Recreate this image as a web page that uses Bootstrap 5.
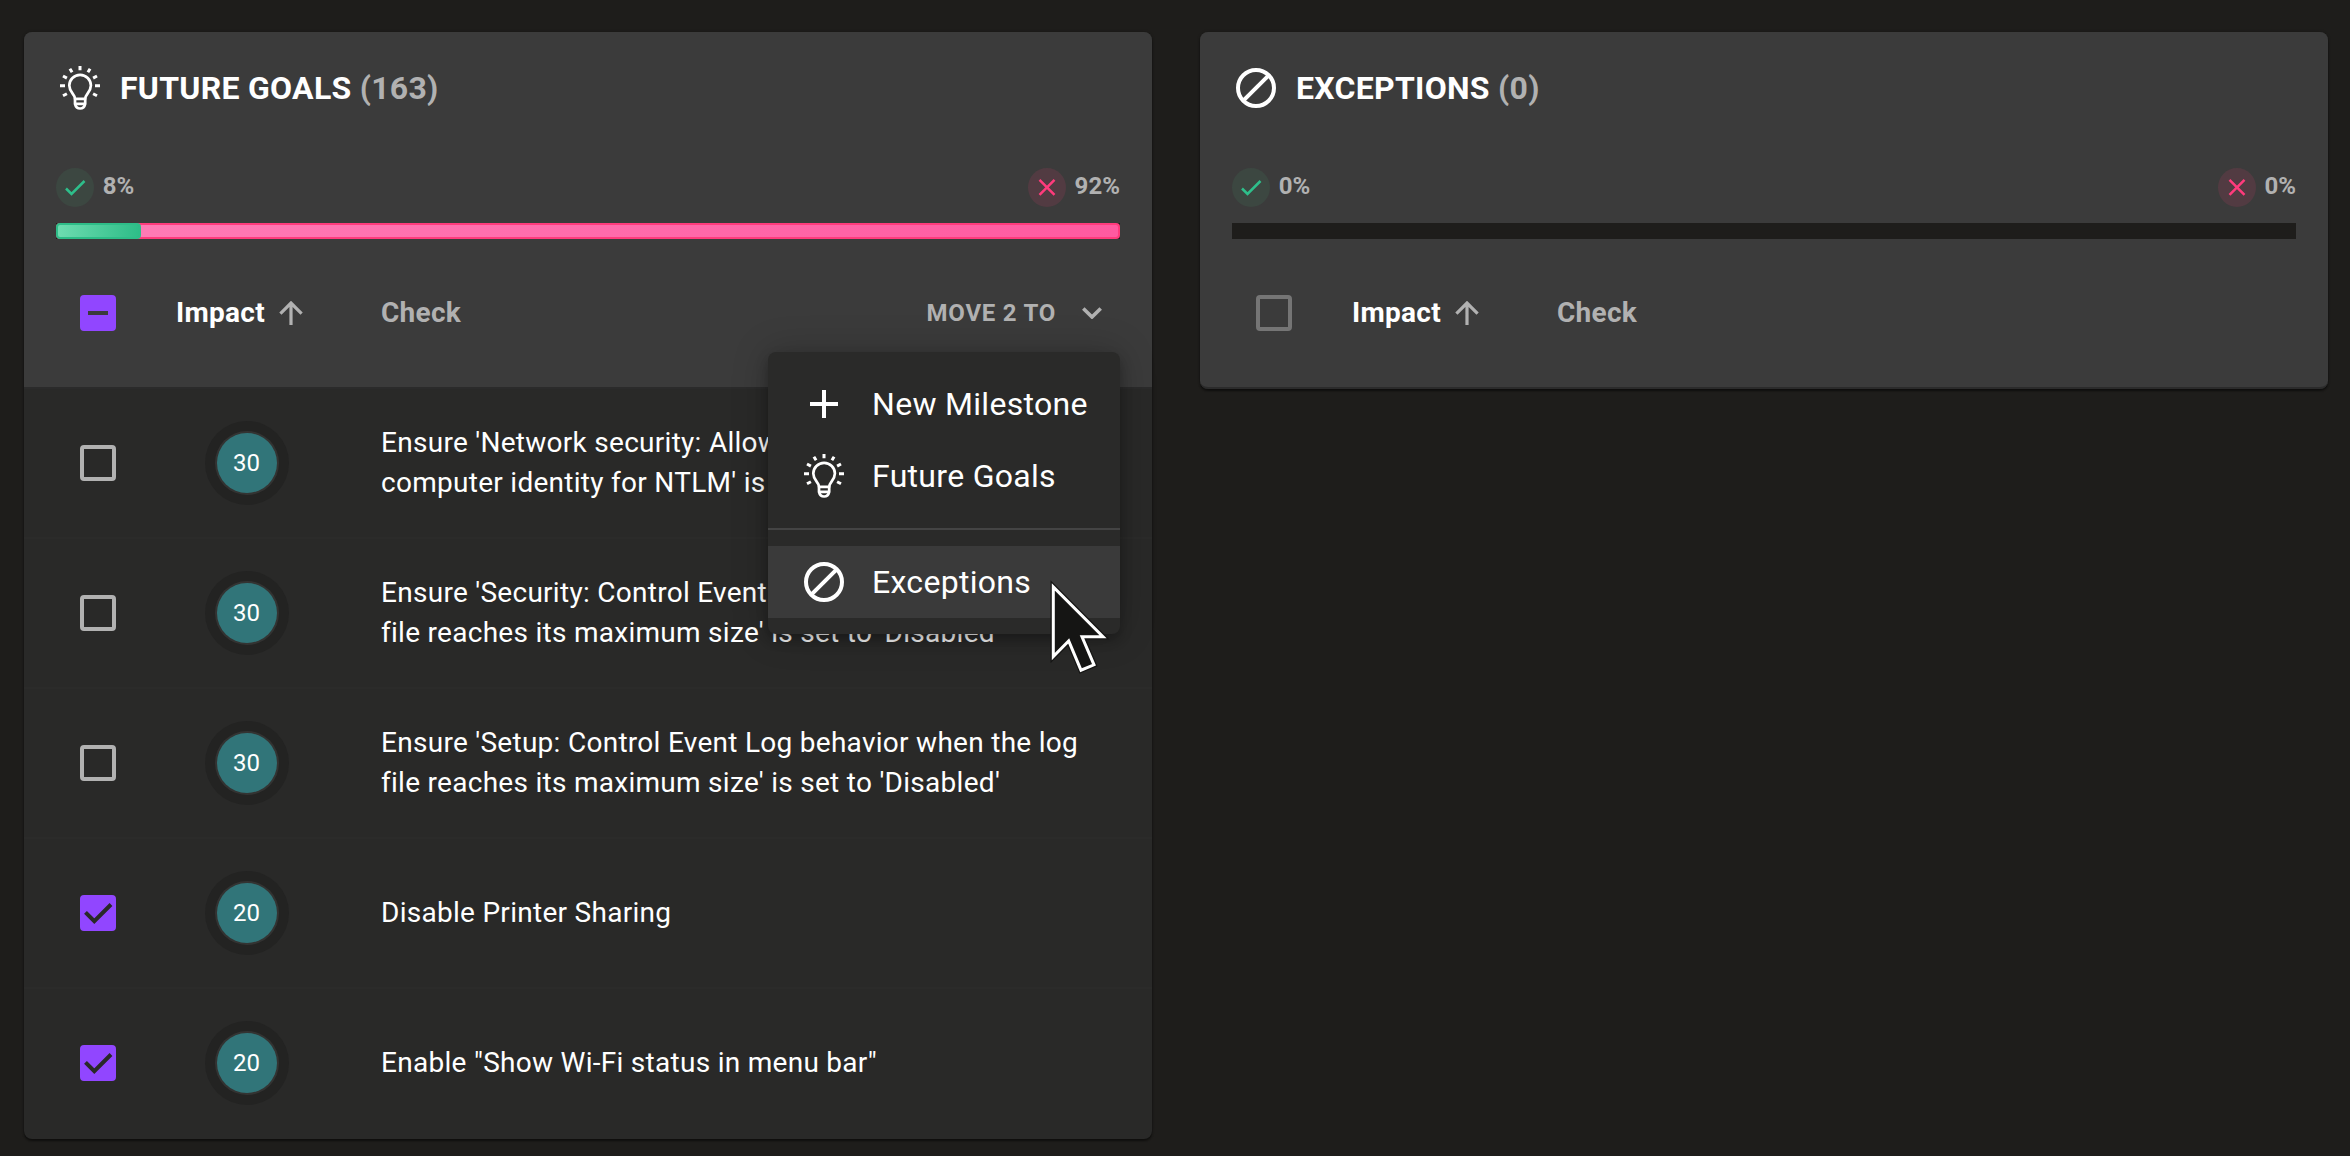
<!DOCTYPE html>
<html lang="en" data-bs-theme="dark">
<head>
<meta charset="utf-8">
<meta name="viewport" content="width=device-width, initial-scale=1">
<title>Milestones</title>
<link href="https://cdn.jsdelivr.net/npm/bootstrap@5.3.0/dist/css/bootstrap.min.css" rel="stylesheet">
<style>
  body { background: #1e1d1b; color: #fff; font-family: Roboto, sans-serif; font-size: 28px; line-height: 40px; letter-spacing: .01em; height: 1156px; overflow: hidden; }
  .board { padding: 32px 22px 0 24px; gap: 48px; }
  .goal-card { width: 1128px; background: #292928; border: 0; border-radius: 8px; box-shadow: 0 2px 2px rgba(0,0,0,.45), 0 0 3px rgba(0,0,0,.25); color: #fff; }
  .goal-head { background: #3b3b3b; height: 357px; padding: 32px 32px 0; border-bottom: 2px solid #2b2b2b; border-radius: 8px 8px 0 0; letter-spacing: .28px; }
  .goal-card.empty .goal-head { border-radius: 8px; }
  .goal-title { font-size: 32px; line-height: 48px; font-weight: 700; gap: 16px; margin: 0; letter-spacing: .28px; }
  .muted { color: #b1b1b1; }
  .ico { width: 48px; height: 48px; flex: none; display: block; }
  .rates { height: 39px; margin-top: 56px; font-size: 24px; line-height: 36px; font-weight: 700; letter-spacing: .05px; }
  .rate { gap: 8.700px; }
  .dot { width: 38px; height: 39px; border-radius: 50%; flex: none; }
  .dot.ok { background: #3c4741; } .dot.bad { background: #523b42; }
  .dot svg { display: block; }
  .meter { height: 16px; margin-top: 16px; background: #1e1d1b; }
  .meter-fail { height: 16px; border: 2px solid #ff3b7c; border-radius: 4px; background: linear-gradient(90deg,#ff7db7,#ff5aa0); }
  .meter-pass { height: 16px; margin: -2px; border: 2px solid #2ebd88; border-radius: 4px; background: linear-gradient(90deg,#6ddcb0,#2ebd88); }
  .cols { height: 48px; margin-top: 50px; padding-left: 24px; font-weight: 700; }
  .c-check { width: 96px; flex: none; }
  .c-impact { width: 205px; flex: none; }
  .sort { margin-left: 14.500px; }
  .tick { width: 36px; height: 36px; border-radius: 4px; border: 4px solid #b1b1b1; }
  .tick.off { border-color: #757575; }
  .tick.on { background: #9146ff; border-color: #9146ff; color: #292928; }
  .tick svg { display: block; margin: -4px; }
  .move-btn { font-size: 24px; font-weight: 700; letter-spacing: .75px; padding: 0 18px 0 0; gap: 26px; border: 0; line-height: 36px; }
  .check-row { height: 150px; padding: 0 32px 0 56px; border-bottom: 2px solid #2b2b2a; letter-spacing: .28px; }
  .check-row:last-child { border-color: transparent; }
  .score { width: 60px; height: 60px; border-radius: 50%; background: #317579; box-shadow: 0 0 0 2px #333332, 0 0 0 12px #232322; font-size: 24px; letter-spacing: 0; margin-left: 41px; padding-right: 1px; }
  .move-menu { display: block; left: 768px; top: 352px; width: 352px; padding: 16px 0; background: #2a2a29; border: 0; border-radius: 8px; box-shadow: 0 6px 12px rgba(0,0,0,.25), 0 0 36px rgba(0,0,0,.22); font-size: 32px; }
  .move-menu .dropdown-item { height: 72px; padding: 0 32px; gap: 24px; color: #fff; letter-spacing: .3px; background: transparent; }
  .move-menu .dropdown-item.hovered { background: #3a3a3a; }
  .move-menu .dropdown-divider { margin: 16px 0; border-top: 2px solid #444; opacity: 1; }
  .pointer { left: 1046px; top: 575px; z-index: 1100; }
</style>
</head>
<body>
<svg class="d-none">
  <symbol id="bulb" viewBox="0 0 48 48">
    <g fill="none" stroke="currentColor" stroke-width="2.700" stroke-linecap="round" stroke-linejoin="round">
      <path d="M19 34.800c0-4.800-5.700-6.600-5.700-13.200a10.800 10.800 0 0 1 21.600 0c0 6.600-5.700 8.400-5.700 13.200z"/>
      <path d="M19 34.800v5.200c.6 2.600 2.300 4.500 5.100 4.500s4.500-1.900 5.100-4.500v-5.200M19.300 39.800h9.600"/>
      <path stroke-linecap="butt" stroke-width="3" d="M24 2v4.300M13.900 4.700l2.200 3.500M34.100 4.700l-2.200 3.500M7 12l3.900 2.100M41 12l-3.900 2.100M4 21.800h5M44 21.800h-5M7 31.800l3.900-2.100M41 31.800l-3.900-2.100"/>
    </g>
  </symbol>
  <symbol id="block" viewBox="0 0 48 48"><g fill="none" stroke="currentColor" stroke-width="4"><circle cx="24" cy="24" r="18"/><path d="M11.300 36.700 36.700 11.300"/></g></symbol>
  <symbol id="pass" viewBox="0 0 38 39"><path d="M10 20.500l5.500 5.500L28.500 13" fill="none" stroke="#2ebf8b" stroke-width="2.500"/></symbol>
  <symbol id="fail" viewBox="0 0 38 39"><path d="M11.500 11.800l15 15M26.500 11.800l-15 15" fill="none" stroke="#ff3b7c" stroke-width="2.500"/></symbol>
  <symbol id="arrow" viewBox="0 0 24 24"><path d="M12 24V2M1.400 12.600 12 2l10.600 10.600" fill="none" stroke="currentColor" stroke-width="3.200"/></symbol>
  <symbol id="done" viewBox="0 0 36 36"><path d="M5.500 17.300l8.800 8.800L31 9.500" fill="none" stroke="currentColor" stroke-width="4"/></symbol>
</svg>

<main class="board d-flex align-items-start position-relative">
  <section class="goal-card card">
    <div class="goal-head">
      <h2 class="goal-title d-flex align-items-center"><svg class="ico"><use href="#bulb"/></svg><span>FUTURE GOALS <span class="muted">(163)</span></span></h2>
      <div class="rates d-flex justify-content-between muted">
        <div class="rate d-flex"><span class="dot ok"><svg width="38" height="39"><use href="#pass"/></svg></span>8%</div>
        <div class="rate d-flex"><span class="dot bad"><svg width="38" height="39"><use href="#fail"/></svg></span>92%</div>
      </div>
      <div class="meter"><div class="meter-fail"><div class="meter-pass" style="width:85px"></div></div></div>
      <div class="cols d-flex align-items-center">
        <div class="c-check"><div class="tick on"><svg width="36" height="36"><path d="M8 18h20" stroke="#3b3b3b" stroke-width="4"/></svg></div></div>
        <div class="c-impact d-flex align-items-center">Impact<svg class="muted sort" width="24" height="24"><use href="#arrow"/></svg></div>
        <div class="muted">Check</div>
        <button class="btn move-btn muted d-flex align-items-center ms-auto">MOVE 2 TO<svg width="20" height="12"><path d="M1.300 1.500 10 10l8.700-8.500" fill="none" stroke="currentColor" stroke-width="3.600"/></svg></button>
      </div>
    </div>
    <div class="check-row d-flex align-items-center">
      <div class="c-check"><div class="tick"></div></div>
      <div class="c-impact"><div class="score d-flex align-items-center justify-content-center">30</div></div>
      <div>Ensure 'Network security: Allow Local System to use computer identity for NTLM' is set to 'Enabled'</div>
    </div>
    <div class="check-row d-flex align-items-center">
      <div class="c-check"><div class="tick"></div></div>
      <div class="c-impact"><div class="score d-flex align-items-center justify-content-center">30</div></div>
      <div>Ensure 'Security: Control Event Log behavior when the log file reaches its maximum size' is set to 'Disabled'</div>
    </div>
    <div class="check-row d-flex align-items-center">
      <div class="c-check"><div class="tick"></div></div>
      <div class="c-impact"><div class="score d-flex align-items-center justify-content-center">30</div></div>
      <div>Ensure 'Setup: Control Event Log behavior when the log<br>file reaches its maximum size' is set to 'Disabled'</div>
    </div>
    <div class="check-row d-flex align-items-center">
      <div class="c-check"><div class="tick on"><svg width="36" height="36"><use href="#done"/></svg></div></div>
      <div class="c-impact"><div class="score d-flex align-items-center justify-content-center">20</div></div>
      <div>Disable Printer Sharing</div>
    </div>
    <div class="check-row d-flex align-items-center">
      <div class="c-check"><div class="tick on"><svg width="36" height="36"><use href="#done"/></svg></div></div>
      <div class="c-impact"><div class="score d-flex align-items-center justify-content-center">20</div></div>
      <div>Enable "Show Wi-Fi status in menu bar"</div>
    </div>
  </section>

  <section class="goal-card card empty">
    <div class="goal-head">
      <h2 class="goal-title d-flex align-items-center"><svg class="ico"><use href="#block"/></svg><span>EXCEPTIONS <span class="muted">(0)</span></span></h2>
      <div class="rates d-flex justify-content-between muted">
        <div class="rate d-flex"><span class="dot ok"><svg width="38" height="39"><use href="#pass"/></svg></span>0%</div>
        <div class="rate d-flex"><span class="dot bad"><svg width="38" height="39"><use href="#fail"/></svg></span>0%</div>
      </div>
      <div class="meter"></div>
      <div class="cols d-flex align-items-center">
        <div class="c-check"><div class="tick off"></div></div>
        <div class="c-impact d-flex align-items-center">Impact<svg class="muted sort" width="24" height="24"><use href="#arrow"/></svg></div>
        <div class="muted">Check</div>
      </div>
    </div>
  </section>

  <div class="dropdown-menu move-menu position-absolute">
    <a class="dropdown-item d-flex align-items-center"><svg class="ico" viewBox="0 0 48 48"><path d="M24 10v28M10 24h28" stroke="currentColor" stroke-width="4"/></svg>New Milestone</a>
    <a class="dropdown-item d-flex align-items-center"><svg class="ico"><use href="#bulb"/></svg>Future Goals</a>
    <hr class="dropdown-divider">
    <a class="dropdown-item hovered d-flex align-items-center"><svg class="ico"><use href="#block"/></svg>Exceptions</a>
  </div>
  <svg class="pointer position-absolute" width="64" height="102" viewBox="0 0 64 102">
    <path d="M7.300 12V81.500L22.700 66 35 95.200 48 89.800 36 61.800H57z" fill="#151514" stroke="#151514" stroke-width="5.500"/>
    <path d="M7.300 12V81.500L22.700 66 35 95.200 48 89.800 36 61.800H57z" fill="#151514" stroke="#fff" stroke-width="3"/>
  </svg>
</main>
<script src="https://cdn.jsdelivr.net/npm/bootstrap@5.3.0/dist/js/bootstrap.bundle.min.js"></script>
</body>
</html>
